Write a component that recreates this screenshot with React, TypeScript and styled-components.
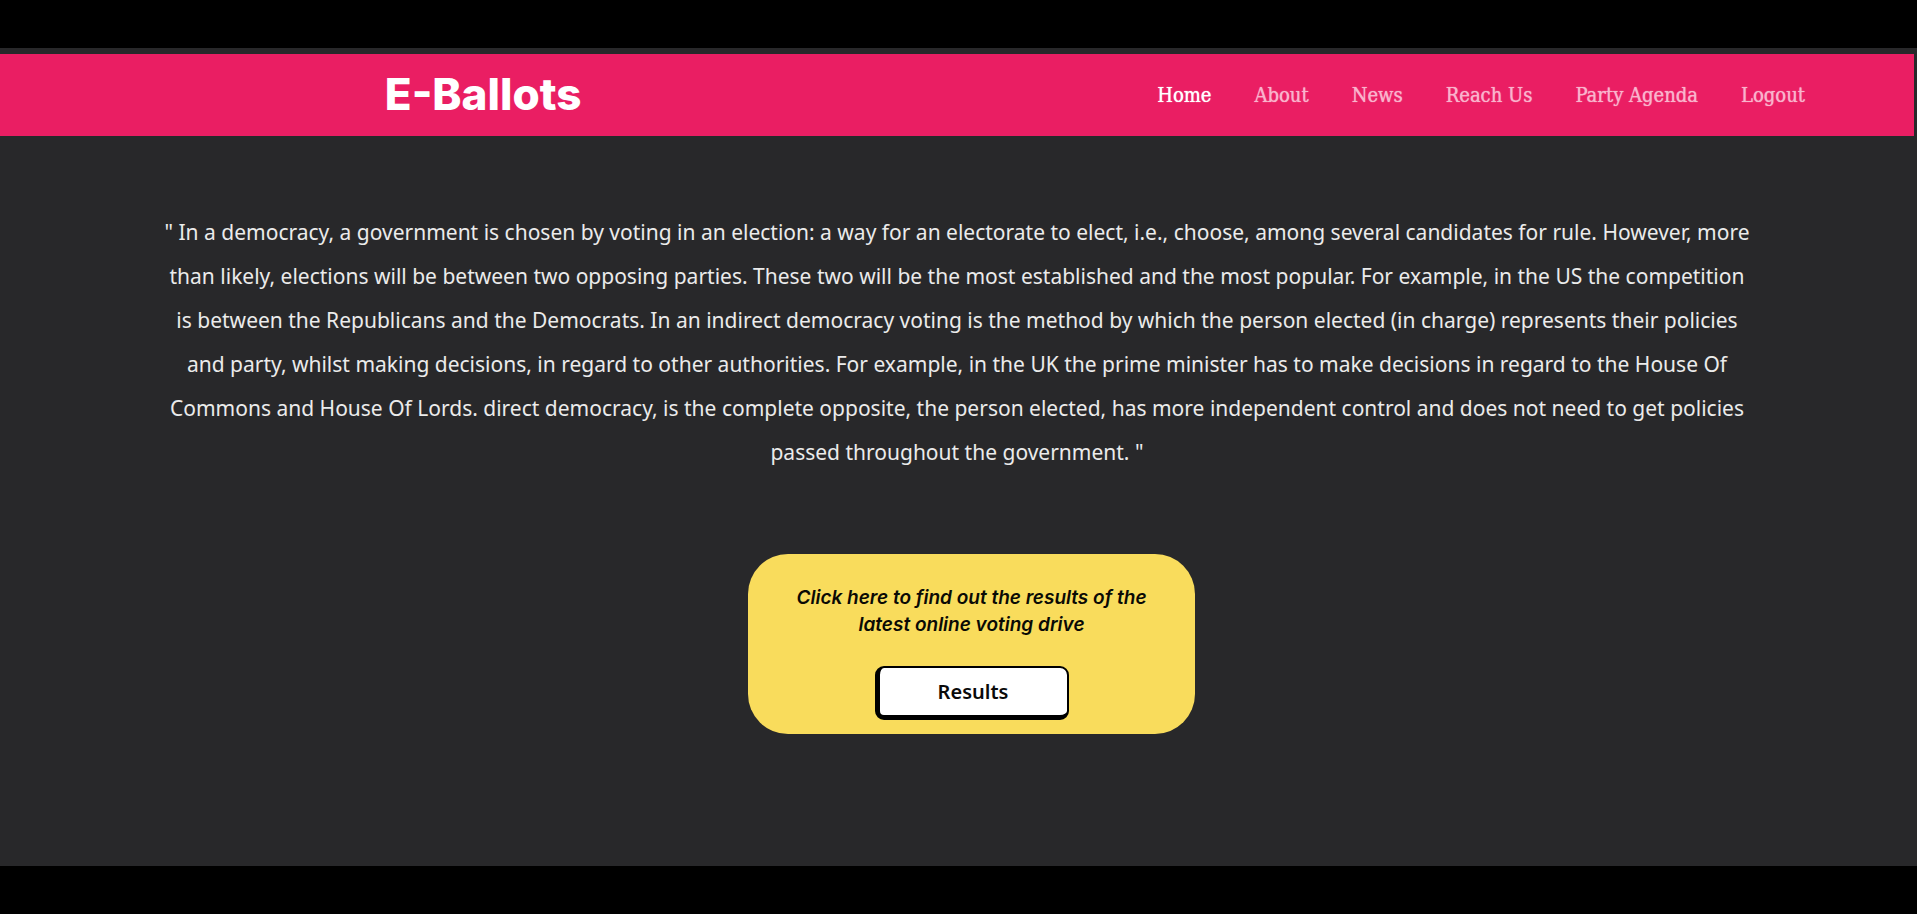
import React from "react";
import styled, { createGlobalStyle } from "styled-components";

const GlobalStyle = createGlobalStyle`
  * { box-sizing: border-box; }
  body { margin: 0; background: #000; }
`;

const Frame = styled.div`
  min-height: 100vh;
  padding: 48px 0;
  background: #000;
  display: flex;
  flex-direction: column;
`;

const Page = styled.div`
  flex: 1;
  padding: 6px 3px 0 0;
  background: #28282a;
`;

const NavBar = styled.header`
  display: flex;
  align-items: center;
  justify-content: space-between;
  min-height: 82px;
  padding: 0 109px 0 calc(20% + 2px);
  background: #ea1e63;
`;

const Brand = styled.a`
  padding-bottom: 2px;
  color: #fff;
  font: 800 44px/52px Inter, sans-serif;
  text-decoration: none;
`;

const Nav = styled.nav`
  display: flex;
  gap: 43px;
`;

const NavLink = styled.a<{ $active?: boolean }>`
  color: ${(p) => (p.$active ? "#fff" : "#f9b4cc")};
  font: 20px/28px "DejaVu Serif Condensed", "DejaVu Serif", serif;
  font-stretch: condensed;
  text-shadow: 0 0 1px currentColor;
  text-decoration: none;
  white-space: nowrap;
`;

const Main = styled.main`
  display: flex;
  flex-direction: column;
  align-items: center;
  padding: 74px 150px 132px;
`;

const Quote = styled.p`
  margin: 0;
  color: #ebebeb;
  font: 21px/44px "Noto Sans", sans-serif;
  text-align: center;
`;

const Card = styled.section`
  display: flex;
  flex-direction: column;
  align-items: center;
  width: 447px;
  margin: 80px 0 0 29px;
  padding: 30px 36px 14px;
  border-radius: 40px;
  background: #f9dc5c;
`;

const CardText = styled.p`
  margin: 0 0 28px;
  color: #0a0a05;
  font: italic 600 19px/27px Inter, sans-serif;
  text-align: center;
`;

const ResultsButton = styled.button`
  width: 194px;
  height: 54px;
  padding: 0;
  border: solid #000;
  border-width: 2px 2px 5px 5px;
  border-radius: 9px;
  background: #fff;
  color: #0a0a0a;
  font: 600 20px/28px "Noto Sans", sans-serif;
`;

const links = ["Home", "About", "News", "Reach Us", "Party Agenda", "Logout"];

export default function App() {
  return (
    <Frame>
      <GlobalStyle />
      <Page>
        <NavBar>
          <Brand href="#">E-Ballots</Brand>
          <Nav>
            {links.map((label, i) => (
              <NavLink key={label} href="#" $active={i === 0}>
                {label}
              </NavLink>
            ))}
          </Nav>
        </NavBar>
        <Main>
          <Quote>
            " In a democracy, a government is chosen by voting in an election: a way for an electorate to elect, i.e., choose, among several candidates for rule. However, more
            <br />
            than likely, elections will be between two opposing parties. These two will be the most established and the most popular. For example, in the US the competition
            <br />
            is between the Republicans and the Democrats. In an indirect democracy voting is the method by which the person elected (in charge) represents their policies
            <br />
            and party, whilst making decisions, in regard to other authorities. For example, in the UK the prime minister has to make decisions in regard to the House Of
            <br />
            Commons and House Of Lords. direct democracy, is the complete opposite, the person elected, has more independent control and does not need to get policies
            <br />
            passed throughout the government. "
          </Quote>
          <Card>
            <CardText>Click here to find out the results of the latest online voting drive</CardText>
            <ResultsButton type="button">Results</ResultsButton>
          </Card>
        </Main>
      </Page>
    </Frame>
  );
}
